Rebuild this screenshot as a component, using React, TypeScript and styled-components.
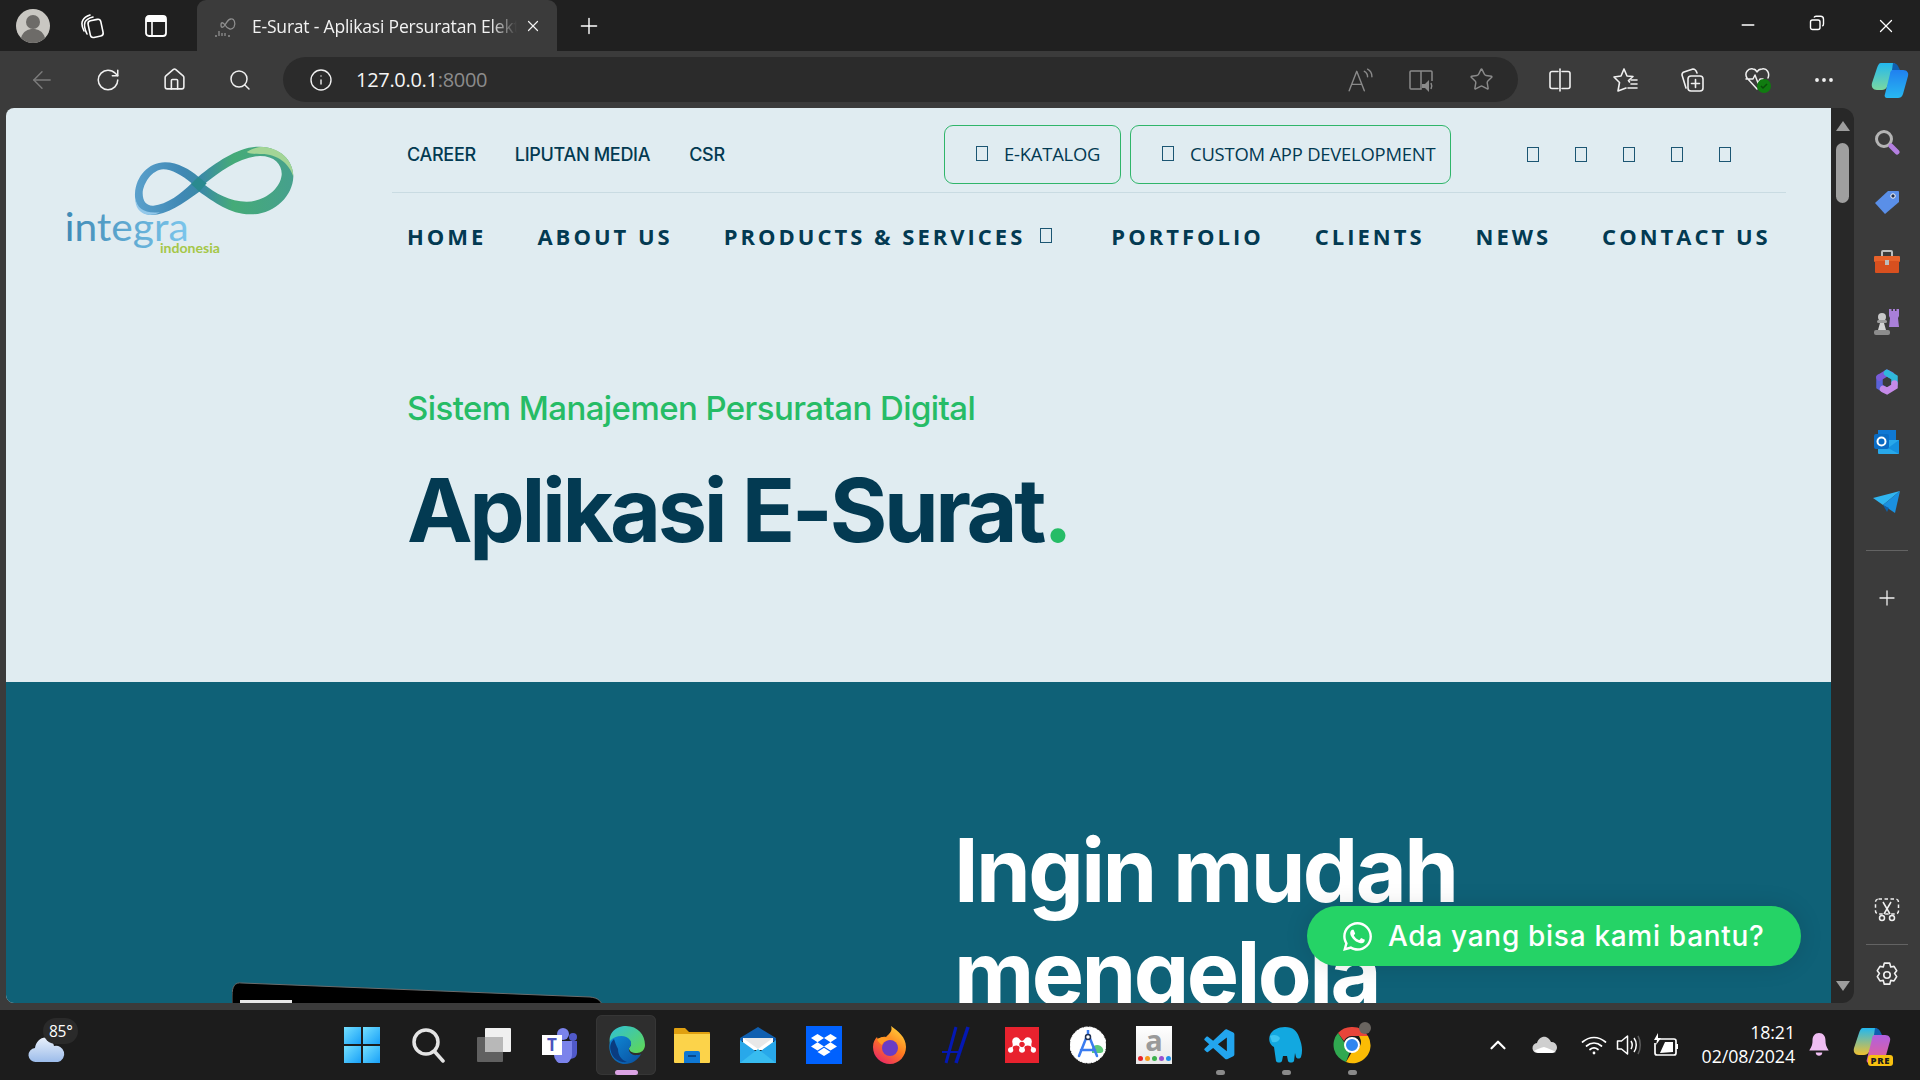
import React from 'react';
import styled, { createGlobalStyle } from 'styled-components';
import { ArrowLeft, RotateCw, House, Search, Info, Star, Plus, X, Ellipsis, ChevronUp, Minus } from 'lucide-react';
import { FaWhatsapp } from 'react-icons/fa';
import { SiDropbox, SiMendeley } from 'react-icons/si';
import { VscVscode } from 'react-icons/vsc';

const GlobalStyle = createGlobalStyle`
  html, body { margin: 0; padding: 0; background: #202020; overflow: hidden; }
  * { box-sizing: border-box; }
`;

const Screen = styled.div`
  width: 1920px;
  height: 1080px;
  display: flex;
  flex-direction: column;
  background: #3b3b3b;
  font-family: "Open Sans", sans-serif;
  overflow: hidden;
`;

/* browser chrome */
const TabBar = styled.div`
  height: 51px;
  flex: none;
  background: #202020;
  display: flex;
  align-items: center;
  color: #fff;
`;

const TabIcon = styled.div<{ $w: number }>`
  width: ${p => p.$w}px;
  flex: none;
  display: flex;
  justify-content: center;
  align-items: center;
`;

const Tab = styled.div`
  width: 360px;
  height: 51px;
  margin-left: 6px;
  flex: none;
  background: #3b3b3b;
  border-radius: 9px 9px 0 0;
  display: flex;
  align-items: center;
  padding-left: 17px;
  color: #f2f2f2;
  font-size: 17.5px;
`;

const TabTitle = styled.span`
  width: 265px;
  margin: 0 7px 0 14px;
  white-space: nowrap;
  overflow: hidden;
  letter-spacing: -0.2px;
  -webkit-mask-image: linear-gradient(to right, #000 90%, transparent);
  mask-image: linear-gradient(to right, #000 90%, transparent);
`;

const WindowControls = styled.div`
  margin-left: auto;
  display: flex;
  padding-right: 0;
`;

const WindowButton = styled.div`
  width: 69px;
  display: flex;
  justify-content: center;
  color: #fff;
`;

const Toolbar = styled.div`
  height: 57px;
  flex: none;
  display: flex;
  align-items: flex-start;
  padding: 6px 0 0 9px;
  color: #f0f0f0;
`;

const ToolSlot = styled.div<{ $dim?: boolean }>`
  width: 66px;
  height: 45px;
  flex: none;
  display: flex;
  align-items: center;
  justify-content: center;
  color: ${p => (p.$dim ? '#7c7c7c' : '#f0f0f0')};
`;

const AddressBar = styled.div`
  width: 1235px;
  height: 45px;
  margin: 0 9px 0 10px;
  flex: none;
  border-radius: 23px;
  background: #2b2b2b;
  display: flex;
  align-items: center;
  padding-left: 26px;
  font-size: 20px;
  letter-spacing: -0.3px;
`;

const Host = styled.span`
  margin-left: 23px;
  color: #f5f5f5;
`;

const Port = styled.span`
  color: #8c8c8c;
`;

const AddressActions = styled.div`
  margin-left: auto;
  margin-right: 24px;
  display: flex;
  align-items: center;
  gap: 35px;
  color: #8a8a8a;
`;

/* middle */
const Middle = styled.div`
  flex: 1;
  min-height: 0;
  display: flex;
  padding-left: 6px;
`;

const Page = styled.div`
  width: 1825px;
  height: 895px;
  flex: none;
  position: relative;
  overflow: hidden;
  border-radius: 8px 0 0 8px;
  background: #e0ecf1;
`;

const Scrollbar = styled.div`
  width: 23px;
  height: 895px;
  flex: none;
  background: #282828;
  border-radius: 0 12px 12px 0;
  display: flex;
  flex-direction: column;
  align-items: center;
  padding: 13px 0 12px;
`;

const ScrollArrow = styled.div<{ $down?: boolean }>`
  width: 0;
  height: 0;
  border-left: 7px solid transparent;
  border-right: 7px solid transparent;
  ${p => (p.$down ? 'border-top: 10px solid #9d9d9d; margin-top: auto;' : 'border-bottom: 10px solid #9d9d9d;')}
`;

const ScrollThumb = styled.div`
  width: 13px;
  height: 60px;
  margin-top: 12px;
  border-radius: 7px;
  background: #9f9f9f;
`;

const SideBar = styled.div`
  flex: 1;
  height: 897px;
  display: flex;
  flex-direction: column;
  align-items: center;
  padding-top: 4px;
  color: #f0f0f0;
`;

const SideSlot = styled.div<{ $top?: number }>`
  width: 100%;
  height: 60px;
  margin-top: ${p => p.$top ?? 0}px;
  flex: none;
  display: flex;
  align-items: center;
  justify-content: center;
`;

const SideRule = styled.div<{ $top: number }>`
  width: 42px;
  height: 1px;
  margin-top: ${p => p.$top}px;
  flex: none;
  background: #636363;
`;

const SideBottom = styled.div`
  margin-top: auto;
  width: 100%;
  display: flex;
  flex-direction: column;
  align-items: center;
`;

/* site */
const Header = styled.div`
  display: flex;
  height: 172px;
`;

const LogoCol = styled.div`
  width: 386px;
  flex: none;
  padding: 22px 0 0 44px;
`;

const HeaderRight = styled.div`
  width: 1394px;
  flex: none;
`;

const TopBar = styled.div`
  height: 85px;
  padding: 17px 0 0 15px;
  display: flex;
  align-items: flex-start;
  border-bottom: 1px solid #c9dbe2;
  color: #033a52;
`;

const TopLinks = styled.div`
  height: 58px;
  display: flex;
  align-items: center;
  gap: 39px;
`;

const TopLink = styled.a`
  font-family: Inter, sans-serif;
  font-size: 18px;
  font-weight: 500;
  letter-spacing: -0.3px;
  color: #033a52;
`;

const TopButtons = styled.div`
  margin-left: auto;
  display: flex;
  gap: 9px;
`;

const OutlineButton = styled.a<{ $w: number }>`
  width: ${p => p.$w}px;
  height: 59px;
  padding: 0 0 2px 31px;
  display: flex;
  align-items: center;
  gap: 16px;
  border: 1px solid #2fb56a;
  border-radius: 9px;
  font-family: "Open Sans", sans-serif;
  font-size: 18.4px;
  letter-spacing: -0.2px;
  color: #033a52;
  white-space: nowrap;
`;

const Socials = styled.div`
  height: 58px;
  margin-left: 76px;
  padding-right: 55px;
  display: flex;
  align-items: center;
  gap: 36px;
`;

const Tofu = styled.span`
  display: inline-block;
  width: 12px;
  height: 15px;
  flex: none;
  border: 1px solid #1c5673;
`;

const NavCaret = styled(Tofu)`
  margin-right: 8px;
`;

const MainNav = styled.div`
  height: 85px;
  padding-left: 15px;
  display: flex;
  align-items: center;
  gap: 51px;
`;

const NavLink = styled.a`
  display: flex;
  align-items: center;
  gap: 15px;
  font-family: "Open Sans", sans-serif;
  font-size: 22px;
  font-weight: 700;
  letter-spacing: 3px;
  color: #033a52;
  white-space: nowrap;
`;

const Hero = styled.div`
  height: 402px;
  padding: 106px 0 0 401px;
`;

const Eyebrow = styled.div`
  font-family: Inter, sans-serif;
  font-size: 33px;
  line-height: 44px;
  font-weight: 500;
  letter-spacing: -0.58px;
  color: #26bc66;
`;

const HeroTitle = styled.h1`
  margin: 30px 0 0;
  font-family: Inter, sans-serif;
  font-size: 88px;
  line-height: 100px;
  font-weight: 650;
  letter-spacing: -3.36px;
  color: #033a52;
`;

const Dot = styled.span`
  color: #26bc66;
`;

const Band = styled.div`
  height: 321px;
  background: #0f6177;
  display: flex;
  overflow: hidden;
`;

const BandMedia = styled.div`
  width: 948px;
  flex: none;
  padding: 300px 0 0 226px;
`;

const BandText = styled.h2`
  width: 560px;
  margin: 137px 0 0;
  font-family: Inter, sans-serif;
  font-size: 88px;
  line-height: 103px;
  font-weight: 650;
  letter-spacing: -2.6px;
  color: #fff;
`;

const ChatButton = styled.a`
  position: absolute;
  left: 1301px;
  top: 798px;
  width: 494px;
  height: 60px;
  padding-left: 34px;
  display: flex;
  align-items: center;
  gap: 14px;
  border-radius: 30px;
  background: #25d366;
  box-shadow: 0 0 24px rgba(0, 0, 0, 0.12);
  color: #fff;
  font-family: Inter, sans-serif;
  font-size: 28px;
  font-weight: 500;
  letter-spacing: 0.7px;
  white-space: nowrap;
`;

/* taskbar */
const Taskbar = styled.div`
  height: 70px;
  flex: none;
  margin-top: 7px;
  background: #1c1c1c;
  display: flex;
  align-items: center;
  color: #fff;
`;

const WeatherSlot = styled.div`
  width: 329px;
  height: 70px;
  flex: none;
  position: relative;
  padding: 22px 0 0 28px;
`;

const TempBadge = styled.div`
  position: absolute;
  left: 43px;
  top: 8px;
  height: 26px;
  padding: 0 6px;
  line-height: 26px;
  border-radius: 13px;
  background: #2a2a2a;
  font-size: 15.5px;
  letter-spacing: -0.3px;
`;

const TaskSlot = styled.div<{ $active?: boolean }>`
  width: 66px;
  height: 60px;
  flex: none;
  position: relative;
  display: flex;
  align-items: center;
  justify-content: center;
  border-radius: 6px;
  ${p => p.$active && 'background: #2e2e2e; box-shadow: inset 0 0 0 1px #363636; width: 60px; margin: 0 3px;'}
`;

const RunDot = styled.span<{ $active?: boolean }>`
  position: absolute;
  bottom: 0;
  left: 50%;
  width: ${p => (p.$active ? 23 : 9)}px;
  height: 5px;
  margin-left: ${p => (p.$active ? -11.5 : -4.5)}px;
  border-radius: 3px;
  background: ${p => (p.$active ? '#dba3e4' : '#8a8a8a')};
`;

const Tray = styled.div`
  margin-left: auto;
  height: 70px;
  display: flex;
  align-items: center;
`;

const TraySlot = styled.div<{ $w: number }>`
  width: ${p => p.$w}px;
  flex: none;
  display: flex;
  align-items: center;
  justify-content: center;
`;

const Clock = styled.div`
  width: 110px;
  margin-top: -3px;
  text-align: right;
  font-size: 17.8px;
  line-height: 24px;
  letter-spacing: -0.1px;
`;

const AmazonTile = styled.div`
  width: 36px;
  height: 38px;
  background: linear-gradient(#fff, #e8e8e8);
  display: flex;
  flex-direction: column;
  align-items: center;
  font-family: "Open Sans", sans-serif;
  font-size: 29px;
  line-height: 27px;
  font-weight: 700;
  color: #9a9a9a;
`;

const AmazonDots = styled.div`
  display: flex;
  gap: 2px;
  margin-top: 3px;
`;

const AmazonDot = styled.span<{ $c: string }>`
  width: 5px;
  height: 5px;
  border-radius: 50%;
  background: ${p => p.$c};
`;

const BrandTile = styled.div<{ $bg: string; $w: number; $h: number }>`
  width: ${p => p.$w}px;
  height: ${p => p.$h}px;
  background: ${p => p.$bg};
  color: #fff;
  display: flex;
  align-items: center;
  justify-content: center;
`;

/* drawn icons */
const Logo = () => (
  <svg width="260" height="130" viewBox="0 0 780 390">
    <defs>
      <linearGradient id="logoBand" x1="0" x2="1" y1="0" y2="0">
        <stop offset="0" stopColor="#5aa0cc" />
        <stop offset="0.3" stopColor="#3f88b4" />
        <stop offset="0.42" stopColor="#3b8aa6" />
        <stop offset="0.62" stopColor="#45ab78" />
        <stop offset="1" stopColor="#46a08d" />
      </linearGradient>
      <linearGradient id="logoWord" x1="0" x2="1" y1="0" y2="0">
        <stop offset="0" stopColor="#3f8ab5" />
        <stop offset="1" stopColor="#7cc6ec" />
      </linearGradient>
    </defs>
    <path
      fill="url(#logoBand)"
      fillRule="evenodd"
      d="M445 140C500 95 570 48 630 50C690 52 730 90 730 140C728 200 670 255 600 253C540 252 490 215 448 185C400 220 350 255 305 255C270 255 253 220 255 190C258 140 295 97 345 97C385 97 420 120 445 140ZM425 160C395 135 365 118 340 118C305 120 280 160 278 190C278 215 290 228 310 227C350 225 395 190 425 160ZM462 163C510 125 570 80 630 78C675 78 697 105 695 135C690 180 640 215 590 215C540 215 495 190 462 163Z"
    />
    <path fill="#a3d596" d="M590 66C615 52 630 50 640 51C690 54 730 90 730 140C718 100 680 70 630 72C615 72 600 72 590 66Z" />
    <path fill="#93c8ea" d="M256 205C262 235 282 252 330 247C315 254 305 255 300 255C270 255 254 230 256 205Z" />
    <path fill="#2a8a8f" d="M445 140L470 160L448 185L423 162Z" />
    <text x="44" y="332" fontFamily="Lato, sans-serif" fontSize="118" fill="url(#logoWord)" textLength="372" lengthAdjust="spacingAndGlyphs">
      integra
    </text>
    <text x="330" y="368" fontFamily="Lato, sans-serif" fontSize="38" fontWeight="700" fill="#a5c747" textLength="180" lengthAdjust="spacingAndGlyphs">
      indonesia
    </text>
  </svg>
);

const Laptop = () => (
  <svg width="372" height="30" viewBox="0 0 372 30">
    <path d="M0 14C0 4 3 0 10 1L358 15C366 16 370 18 372 30H0Z" fill="#000" stroke="#6c6c6c" strokeWidth="1" />
    <path d="M8 18H60V30H8Z" fill="#e8e8e8" />
  </svg>
);

const Avatar = () => (
  <svg width="34" height="34" viewBox="0 0 34 34">
    <circle cx="17" cy="17" r="17" fill="#c9c7c2" />
    <circle cx="17" cy="13" r="7" fill="#6d6b68" />
    <path d="M5 29c2-7 7-9 12-9s10 2 12 9a17 17 0 0 1-24 0Z" fill="#6d6b68" />
  </svg>
);

const line = { fill: 'none', stroke: 'currentColor', strokeWidth: 1.6, strokeLinecap: 'round' as const, strokeLinejoin: 'round' as const };

const TabsIcon = () => (
  <svg width="26" height="26" viewBox="0 0 26 26" {...line}>
    <rect x="9" y="7" width="13" height="17" rx="3" transform="rotate(-12 15 15)" />
    <path d="M7 21C5 17 4 12 5 9c1-2 4-4 8-5" />
    <path d="M4 18C2 14 1 10 3 7c1-2 4-4 7-5" />
  </svg>
);

const VerticalTabsIcon = () => (
  <svg width="22" height="22" viewBox="0 0 22 22">
    <rect x="1" y="1" width="20" height="20" rx="3" fill="none" stroke="#fff" strokeWidth="1.8" />
    <path d="M1 4a3 3 0 0 1 3-3h14a3 3 0 0 1 3 3v3H1Z" fill="#fff" />
    <path d="M7 7v14" stroke="#fff" strokeWidth="1.6" />
  </svg>
);

const Favicon = () => (
  <svg width="24" height="24" viewBox="0 0 24 24" fill="none" stroke="#8f8f8f" strokeWidth="1.3">
    <path d="M11 11c3 5 7 5 9 2 2-4 0-9-3-8-3 0-4 3-6 6Zm0 0c-2-3-4-3-4 0 0 3 2 3 4 0Z" />
    <path d="M1 22h2M5 22v-5M8 22v-3M11 22v-3M14 22h2" />
  </svg>
);

const RestoreIcon = () => (
  <svg width="16" height="16" viewBox="0 0 16 16" fill="none" stroke="#fff" strokeWidth="1.4">
    <rect x="1.5" y="5" width="9.5" height="9.5" rx="2" />
    <path d="M5 2.5c.5-1 1.3-1.300 2-1.300h4.500c1.800 0 3 1.300 3 3V9c0 1-.5 1.700-1.200 2" />
  </svg>
);

const ReadAloud = () => (
  <svg width="26" height="26" viewBox="0 0 24 24" {...line} strokeWidth={1.3}>
    <path d="M2 22 9 4l7 18M5 16h8" />
    <path d="M16 4c2 1 3 3 3 5M19 2c2 1 4 4 4 7" />
  </svg>
);

const ImmersiveIcon = () => (
  <svg width="26" height="26" viewBox="0 0 26 26" fill="none" stroke="currentColor" strokeWidth="1.5">
    <path d="M13 4v18H3a1 1 0 0 1-1-1V5a1 1 0 0 1 1-1h20a1 1 0 0 1 1 1v9" />
    <path d="M14 17h3l4-4v12l-4-4h-3Z" fill="currentColor" stroke="none" />
    <path d="M23 16c1 2 1 4 0 6" />
  </svg>
);

const SplitIcon = () => (
  <svg width="24" height="24" viewBox="0 0 24 24" {...line}>
    <path d="M10 3.500H4a2 2 0 0 0-2 2v13a2 2 0 0 0 2 2h6" />
    <path d="M14 3.500h6a2 2 0 0 1 2 2v13a2 2 0 0 1-2 2h-6" />
    <path d="M12 1v22" />
  </svg>
);

const FavoritesIcon = () => (
  <svg width="26" height="26" viewBox="0 0 26 26" {...line}>
    <path d="M11 2l3 7 6 .5-4.500 4 1 1.500M5 24l1.500-8.500L1 10l7-1 3-7M5 24l8-3" />
    <path d="M18 13h6M18 17h6M15 21h9" />
  </svg>
);

const CollectionsIcon = () => (
  <svg width="26" height="26" viewBox="0 0 26 26" {...line}>
    <path d="M7 21 3 8a3 3 0 0 1 2-3l9-3c2 0 3 1 4 4" />
    <rect x="9" y="9" width="15" height="15" rx="3" />
    <path d="M16.500 12.500v8M12.500 16.500h8" />
  </svg>
);

const HealthIcon = () => (
  <svg width="28" height="28" viewBox="0 0 28 28">
    <path
      d="M13 23 3 12C0 7 4 2 9 3c2 0 3 1 4 3 1-2 3-3 5-3 5-1 8 4 6 9M2 13h7l2-4 3 8 2-4h3"
      fill="none"
      stroke="#f0f0f0"
      strokeWidth="1.500"
      strokeLinecap="round"
      strokeLinejoin="round"
    />
    <circle cx="20" cy="20" r="7" fill="#107c10" />
    <path d="M17 20l2 2 4-4" fill="none" stroke="#0a4d0a" strokeWidth="1.500" />
  </svg>
);

const CopilotIcon = ({ id, pre }: { id: string; pre?: boolean }) => (
  <svg width="38" height="38" viewBox="0 0 38 38">
    <defs>
      <linearGradient id={id + 'a'} x1="0" y1="0" x2="0" y2="1">
        <stop offset="0" stopColor="#22b8f0" />
        <stop offset="1" stopColor={pre ? '#f0c030' : '#7bd8a0'} />
      </linearGradient>
      <linearGradient id={id + 'b'} x1="0" y1="0" x2="0" y2="1">
        <stop offset="0" stopColor={pre ? '#b060e0' : '#2080f0'} />
        <stop offset="1" stopColor={pre ? '#e86090' : '#28b8f0'} />
      </linearGradient>
    </defs>
    <path d="M10 2h12c2 0 3 2 2 4l-8 20c-1 2-3 3-5 3H6c-4 0-6-3-5-7L6 7c1-3 2-5 4-5Z" fill={`url(#${id}a)`} />
    <path d="M22 9h10c4 0 6 3 5 6l-5 18c-1 3-3 4-5 4H16c-2 0-3-2-2-4l5-20c0-2 1-4 3-4Z" fill={`url(#${id}b)`} />
    <path d="M22 2c2 0 4 1 5 3l2 4h-8Z" fill="#0f5fb0" />
  </svg>
);

const MagnifierColor = () => (
  <svg width="26" height="26" viewBox="0 0 26 26">
    <circle cx="10" cy="10" r="7.500" fill="none" stroke="#b4b4b4" strokeWidth="3" />
    <path d="M17 17l6 6" stroke="#b37fe0" strokeWidth="5" strokeLinecap="round" />
  </svg>
);

const TagColor = () => (
  <svg width="26" height="26" viewBox="0 0 26 26">
    <path d="M14 2h10a1 1 0 0 1 1 1v10L11 25 1 14Z" fill="#5a8fe8" strokeLinejoin="round" />
    <circle cx="19" cy="7" r="2.200" fill="#1f2f50" stroke="#fff" strokeWidth="1" />
  </svg>
);

const ToolboxColor = () => (
  <svg width="28" height="26" viewBox="0 0 28 26">
    <path d="M9 7V3a1 1 0 0 1 1-1h8a1 1 0 0 1 1 1v4" fill="none" stroke="#bdbdbd" strokeWidth="2" />
    <rect x="1" y="7" width="26" height="6" fill="#e8622a" rx="1" />
    <rect x="2" y="12" width="24" height="12" fill="#d8501f" rx="1" />
    <rect x="12" y="11" width="4" height="5" fill="#bdbdbd" />
  </svg>
);

const ChessColor = () => (
  <svg width="28" height="28" viewBox="0 0 28 28">
    <path d="M16 1h2.500v2H20V1h2v2h1.500V1H26v7l-1 2 1 9H16l1-9-1-2Z" fill="#a97fd8" />
    <circle cx="9" cy="9" r="4" fill="#c8c8c8" />
    <rect x="4" y="12" width="10" height="3" rx="1.500" fill="#9e9e9e" />
    <path d="M7 15h4l2 7H5Z" fill="#d4d4d4" />
    <rect x="1" y="22" width="16" height="5" rx="2" fill="#8c8c8c" />
  </svg>
);

const OfficeColor = () => (
  <svg width="26" height="28" viewBox="0 0 26 28" fill="none" strokeWidth="6.500" strokeLinecap="round">
    <path d="M5.500 9.500v9l4 2.500" stroke="#5a62d8" />
    <path d="M5.500 9.500 13 5l4 2" stroke="#7b5bd8" />
    <path d="M13 5l7.500 4.500v6" stroke="#30b8dc" />
    <path d="M20.500 15.500v3L13 23l-4-2" stroke="#c58ae8" />
  </svg>
);

const OutlookColor = () => (
  <svg width="26" height="26" viewBox="0 0 26 26">
    <rect x="4" y="1" width="18" height="10" fill="#0f78d4" />
    <path d="M4 11h21v13a1 1 0 0 1-1 1H5a1 1 0 0 1-1-1Z" fill="#28a8ea" />
    <path d="M25 11 14 19l11 6Z" fill="#1490df" />
    <rect x="0" y="5" width="15" height="15" rx="2" fill="#0a6cc4" />
    <circle cx="7.500" cy="12.500" r="4" fill="none" stroke="#fff" strokeWidth="2" />
  </svg>
);

const SendColor = () => (
  <svg width="28" height="24" viewBox="0 0 28 24">
    <path d="M0 8 27 1 10 15Z" fill="#30b5f0" />
    <path d="M27 1 22 23 10 15Z" fill="#1a90e0" />
    <path d="M10 15 14 22 16 18Z" fill="#0d5fa8" />
  </svg>
);

const SnipIcon = () => (
  <svg width="26" height="26" viewBox="0 0 26 26" fill="none" stroke="#f0f0f0" strokeWidth="1.500">
    <rect x="1.500" y="2" width="23" height="15" rx="3" strokeDasharray="3.500 2.500" />
    <path d="M9 5l7 12M17 5l-7 12" />
    <circle cx="8" cy="21" r="2.500" />
    <circle cx="18" cy="21" r="2.500" />
  </svg>
);

const GearIcon = () => (
  <svg width="28" height="28" viewBox="0 0 26 26" fill="none" stroke="#f0f0f0" strokeWidth="1.500" strokeLinejoin="round">
    <path d="M10.500 2h5l1 3.500 3-.5 2.500 4-2 2.500 2 3-2.500 4-3-.5-1 3.500h-5l-1-3.500-3 .5-2.500-4 2-3-2-2.500 2.500-4 3 .5Z" />
    <circle cx="13" cy="13" r="3" />
  </svg>
);

const WeatherIcon = () => (
  <svg width="38" height="32" viewBox="0 0 38 32">
    <defs>
      <linearGradient id="cloudFill" x1="0" y1="0" x2="0" y2="1">
        <stop offset="0" stopColor="#e8f0fb" />
        <stop offset="1" stopColor="#9cbcea" />
      </linearGradient>
    </defs>
    <path d="M8 30a7 7 0 0 1-1-14c1-7 7-12 13-10 4 1 5 4 6 8a8 8 0 0 1 4 16Z" fill="url(#cloudFill)" />
    <rect x="20" y="4" width="5" height="5" fill="#e87a20" />
  </svg>
);

const StartIcon = () => (
  <svg width="36" height="36" viewBox="0 0 36 36">
    <defs>
      <linearGradient id="winA" x1="0" y1="0" x2="1" y2="1">
        <stop offset="0" stopColor="#74e0ff" />
        <stop offset="1" stopColor="#18a0f8" />
      </linearGradient>
    </defs>
    <rect x="0" y="0" width="17" height="17" fill="url(#winA)" />
    <rect x="19" y="0" width="17" height="17" fill="url(#winA)" />
    <rect x="0" y="19" width="17" height="17" fill="url(#winA)" />
    <rect x="19" y="19" width="17" height="17" fill="url(#winA)" />
  </svg>
);

const TaskSearchIcon = () => (
  <svg width="34" height="36" viewBox="0 0 34 36" fill="none" stroke="#e4e4e4" strokeWidth="3.500" strokeLinecap="round">
    <circle cx="15" cy="15" r="12" />
    <path d="M24 25l8 9" />
  </svg>
);

const TaskViewIcon = () => (
  <svg width="36" height="36" viewBox="0 0 36 36">
    <rect x="9" y="1" width="26" height="24" rx="1" fill="#f0f0f0" />
    <rect x="1" y="10" width="26" height="25" rx="1" fill="#6c6c6c" opacity="0.85" />
    <rect x="9" y="10" width="18" height="15" fill="#b8b8b8" />
  </svg>
);

const TeamsIcon = () => (
  <svg width="36" height="36" viewBox="0 0 36 36">
    <circle cx="21" cy="7" r="6" fill="#7b83eb" />
    <circle cx="31" cy="10" r="4" fill="#5059c9" />
    <path d="M26 14h9v12a6 6 0 0 1-9 5Z" fill="#5059c9" />
    <path d="M12 14h18v14a9 9 0 0 1-18 0Z" fill="#7b83eb" />
    <rect x="0" y="8" width="20" height="20" fill="#fff" />
    <text x="10" y="24" textAnchor="middle" fontFamily="Open Sans, sans-serif" fontSize="17" fontWeight="700" fill="#4b53bc">
      T
    </text>
  </svg>
);

const EdgeIcon = () => (
  <svg width="38" height="38" viewBox="0 0 38 38">
    <defs>
      <linearGradient id="edgeA" x1="0" y1="0" x2="1" y2="1">
        <stop offset="0" stopColor="#2fc0d8" />
        <stop offset="1" stopColor="#62d84f" />
      </linearGradient>
      <linearGradient id="edgeB" x1="0" y1="0" x2="1" y2="1">
        <stop offset="0" stopColor="#0f8ad8" />
        <stop offset="1" stopColor="#0a4f9e" />
      </linearGradient>
    </defs>
    <path d="M19 0C31 0 38 9 38 19c0 5-4 8-8 8-5 0-8-2-8-5 2-2 3-4 1-7C19 10 9 11 3 17 1 7 9 0 19 0Z" fill="url(#edgeA)" />
    <path d="M3 15c5-6 16-7 20-1 2 3 1 6-1 8-1 4 3 8 8 7 1 0 3 0 4-1-3 6-9 10-16 10C8 38 0 28 3 15Z" fill="url(#edgeB)" />
    <path d="M11 23c0 6 3 11 9 13-7 1-14-3-16-10-2-6 0-10 3-13 1 3 2 6 4 10Z" fill="#0a3c80" />
  </svg>
);

const FolderIcon = () => (
  <svg width="36" height="36" viewBox="0 0 36 36">
    <path d="M0 2a1 1 0 0 1 1-1h10l4 4h20a1 1 0 0 1 1 1v8H0Z" fill="#e0a010" />
    <path d="M0 7h36v28a1 1 0 0 1-1 1H1a1 1 0 0 1-1-1Z" fill="#fcd34a" />
    <path d="M10 36V26a2 2 0 0 1 2-2h12a2 2 0 0 1 2 2v10Z" fill="#0f78d4" />
    <rect x="14" y="28" width="8" height="2" fill="#08488c" />
  </svg>
);

const MailIcon = () => (
  <svg width="36" height="36" viewBox="0 0 36 36">
    <path d="M0 11 18 0l18 11v3H0Z" fill="#0f5fb0" />
    <path d="M3 11h30v12H3Z" fill="#fff" />
    <path d="M3 11h30L18 22Z" fill="#e8e8e8" />
    <path d="M0 13l18 13 18-13v23H0Z" fill="#28a8ea" />
    <path d="M0 36 18 22l18 14Z" fill="#38bcf0" />
  </svg>
);

const FirefoxIcon = () => (
  <svg width="36" height="38" viewBox="0 0 36 38">
    <defs>
      <linearGradient id="foxA" x1="0.8" y1="0" x2="0.2" y2="1">
        <stop offset="0" stopColor="#ffd53a" />
        <stop offset="0.5" stopColor="#ff7a1f" />
        <stop offset="1" stopColor="#e8226a" />
      </linearGradient>
    </defs>
    <path d="M19 0c7 5 15 11 15 21 0 9-7 17-16 17S1 31 1 21c0-5 2-8 4-10l1 3c2-3 6-4 8-3C17 8 21 5 19 0Z" fill="url(#foxA)" />
    <circle cx="18" cy="22" r="8" fill="#6a3cc4" />
    <path d="M5 13c5-3 10-2 13 1-4 0-7 2-8 5-2-2-4-3-5-6Z" fill="#ff9a24" />
  </svg>
);

const HashIcon = () => (
  <svg width="28" height="38" viewBox="0 0 28 38" fill="none" stroke="#0418b4" strokeLinecap="butt">
    <path d="M14 1 4 37" strokeWidth="3" />
    <path d="M26 1 14 37" strokeWidth="3.500" />
    <path d="M0 26h16" strokeWidth="2" />
  </svg>
);

const StudioIcon = () => (
  <svg width="36" height="38" viewBox="0 0 36 38">
    <circle cx="18" cy="19" r="18" fill="#fff" stroke="#fff" strokeWidth="1" strokeDasharray="4 1" />
    <path d="M22 22c2-4 9-4 11 1 1 3-1 4-3 4h-8Z" fill="#5cc878" />
    <path d="M17 10 9 30M19 10l8 20M11 24h14" fill="none" stroke="#3a7cf0" strokeWidth="2.500" strokeLinecap="round" />
    <path d="M18 4v4" stroke="#3a7cf0" strokeWidth="2.500" />
    <circle cx="18" cy="11" r="2.500" fill="#fff" stroke="#1f2f50" strokeWidth="1.500" />
  </svg>
);

const ElephantIcon = () => (
  <svg width="34" height="36" viewBox="0 0 34 36">
    <path
      d="M16 0c8 0 12 4 14 10 3 7 4 14 2 20-1 2-4 2-5 0l-1-4-1 8c-1 2-5 2-6 0l-1-5h-4l-1 5c-1 2-5 2-6 0L5 20C1 18-1 13 1 8c2-5 8-8 15-8Z"
      fill="#12a8e0"
    />
    <path d="M1 9c4-2 8-1 10 2-1 4-5 5-8 4Z" fill="#3cc4f0" />
  </svg>
);

const ChromeIcon = () => (
  <svg width="40" height="46" viewBox="0 0 40 46">
    <g transform="translate(2 5)">
      <path d="M18 0a18 18 0 0 1 16 9H18a9 9 0 0 0-8 5L4 6a18 18 0 0 1 14-6Z" fill="#e8453a" />
      <path d="M4 6l6 9c2 3 5 5 8 4l-6 16A18 18 0 0 1 4 6Z" fill="#30a850" />
      <path d="M34 9a18 18 0 0 1-22 26l7-12c4 0 8-3 8-8 0-2-1-4-2-6Z" fill="#fbbc05" />
      <circle cx="18" cy="18" r="7" fill="#2f86f0" stroke="#fff" strokeWidth="2" />
    </g>
    <circle cx="33" cy="6" r="6" fill="#6a6560" />
  </svg>
);

const CloudIcon = () => (
  <svg width="26" height="18" viewBox="0 0 26 18">
    <path d="M6 17a5 5 0 0 1-1-10c1-4 5-7 9-6 3 1 4 3 5 5a5.500 5.500 0 0 1 1 11Z" fill="#cfcfcf" />
    <path d="M2 15c3-2 6-3 10-4 4 1 8 3 12 5l-4 1H6Z" fill="#fff" />
  </svg>
);

const WifiIcon = () => (
  <svg width="26" height="20" viewBox="0 0 26 20" fill="none" stroke="#fff" strokeWidth="1.700" strokeLinecap="round">
    <path d="M1.500 7c7-6 16-6 23 0M5.500 11c4.500-4 10.500-4 15 0M9 14.500c2.500-2 5.500-2 8 0" />
    <circle cx="13" cy="18" r="1.400" fill="#fff" stroke="none" />
  </svg>
);

const VolumeIcon = () => (
  <svg width="26" height="22" viewBox="0 0 26 22" fill="none" stroke="#fff" strokeWidth="1.500" strokeLinejoin="round">
    <path d="M1.500 7v8h4l6 5V2l-6 5Z" />
    <path d="M15 7c1.500 2.500 1.500 5.500 0 8M18 4c3 4 3 10 0 14" />
    <path d="M22 2c3 5 3 13 0 18" stroke="#5c5c5c" />
  </svg>
);

const BatteryIcon = () => (
  <svg width="26" height="24" viewBox="0 0 26 24">
    <path d="M6 6h15a2 2 0 0 1 2 2v12a2 2 0 0 1-2 2H4a2 2 0 0 1-2-2V10" fill="none" stroke="#fff" strokeWidth="1.700" />
    <path d="M23 11h2v5h-2Z" fill="#fff" />
    <path d="M7 20 12 9h8v10Z" fill="#fff" />
    <path d="M5 0 1 7h3l-1 5 5-7H5Z" fill="#fff" />
  </svg>
);

const BellIcon = () => (
  <svg width="22" height="26" viewBox="0 0 20 24">
    <path d="M10 1c4 0 6 3 6 7 0 5 2 7 3 9H1c1-2 3-4 3-9 0-4 2-7 6-7Z" fill="#efbdf2" />
    <path d="M7 19h6c0 4-6 4-6 0Z" fill="#efbdf2" />
  </svg>
);

const PreBadge = styled.div`
  position: absolute;
  right: -2px;
  bottom: -2px;
  padding: 0 3px;
  height: 11px;
  line-height: 11px;
  border-radius: 3px;
  background: #f8c010;
  color: #1c1c1c;
  font-size: 9.5px;
  font-weight: 800;
  letter-spacing: 0.6px;
`;

const CopilotWrap = styled.div`
  position: relative;
  display: flex;
`;

const navItems = ['HOME', 'ABOUT US', 'PRODUCTS & SERVICES', 'PORTFOLIO', 'CLIENTS', 'NEWS', 'CONTACT US'];
const amazonColors = ['#e8222a', '#f59a1c', '#3cb04c', '#9a4fd0', '#1f90e8'];

export default function App() {
  return (
    <Screen>
      <GlobalStyle />
      <TabBar>
        <TabIcon $w={66}><Avatar /></TabIcon>
        <TabIcon $w={54}><TabsIcon /></TabIcon>
        <TabIcon $w={71}><VerticalTabsIcon /></TabIcon>
        <Tab>
          <Favicon />
          <TabTitle>E-Surat - Aplikasi Persuratan Elektronik</TabTitle>
          <X size={18} strokeWidth={1.6} />
        </Tab>
        <TabIcon $w={64}><Plus size={26} strokeWidth={1.3} /></TabIcon>
        <WindowControls>
          <WindowButton><Minus size={20} strokeWidth={1.6} /></WindowButton>
          <WindowButton><RestoreIcon /></WindowButton>
          <WindowButton><X size={22} strokeWidth={1.4} /></WindowButton>
        </WindowControls>
      </TabBar>

      <Toolbar>
        <ToolSlot $dim><ArrowLeft size={28} strokeWidth={1.2} /></ToolSlot>
        <ToolSlot><RotateCw size={26} strokeWidth={1.4} /></ToolSlot>
        <ToolSlot><House size={25} strokeWidth={1.5} /></ToolSlot>
        <ToolSlot><Search size={24} strokeWidth={1.5} /></ToolSlot>
        <AddressBar>
          <Info size={24} strokeWidth={1.4} />
          <Host>127.0.0.1<Port>:8000</Port></Host>
          <AddressActions>
            <ReadAloud />
            <ImmersiveIcon />
            <Star size={25} strokeWidth={1.4} />
          </AddressActions>
        </AddressBar>
        <ToolSlot><SplitIcon /></ToolSlot>
        <ToolSlot><FavoritesIcon /></ToolSlot>
        <ToolSlot><CollectionsIcon /></ToolSlot>
        <ToolSlot><HealthIcon /></ToolSlot>
        <ToolSlot><Ellipsis size={24} strokeWidth={1.8} /></ToolSlot>
        <ToolSlot><CopilotIcon id="copilotTop" /></ToolSlot>
      </Toolbar>

      <Middle>
        <Page>
          <Header>
            <LogoCol><Logo /></LogoCol>
            <HeaderRight>
              <TopBar>
                <TopLinks>
                  <TopLink>CAREER</TopLink>
                  <TopLink>LIPUTAN MEDIA</TopLink>
                  <TopLink>CSR</TopLink>
                </TopLinks>
                <TopButtons>
                  <OutlineButton $w={177}><Tofu />E-KATALOG</OutlineButton>
                  <OutlineButton $w={321}><Tofu />CUSTOM APP DEVELOPMENT</OutlineButton>
                </TopButtons>
                <Socials>
                  {[0, 1, 2, 3, 4].map(i => <Tofu key={i} />)}
                </Socials>
              </TopBar>
              <MainNav>
                {navItems.map(item => (
                  <NavLink key={item}>
                    {item}
                    {item === 'PRODUCTS & SERVICES' && <NavCaret />}
                  </NavLink>
                ))}
              </MainNav>
            </HeaderRight>
          </Header>

          <Hero>
            <Eyebrow>Sistem Manajemen Persuratan Digital</Eyebrow>
            <HeroTitle>Aplikasi E-Surat<Dot>.</Dot></HeroTitle>
          </Hero>

          <Band>
            <BandMedia><Laptop /></BandMedia>
            <BandText>Ingin mudah mengelola</BandText>
          </Band>

          <ChatButton>
            <FaWhatsapp size={33} />
            Ada yang bisa kami bantu?
          </ChatButton>
        </Page>

        <Scrollbar>
          <ScrollArrow />
          <ScrollThumb />
          <ScrollArrow $down />
        </Scrollbar>

        <SideBar>
          <SideSlot><MagnifierColor /></SideSlot>
          <SideSlot><TagColor /></SideSlot>
          <SideSlot><ToolboxColor /></SideSlot>
          <SideSlot><ChessColor /></SideSlot>
          <SideSlot><OfficeColor /></SideSlot>
          <SideSlot><OutlookColor /></SideSlot>
          <SideSlot><SendColor /></SideSlot>
          <SideRule $top={18} />
          <SideSlot $top={17}><Plus size={24} strokeWidth={1.3} /></SideSlot>
          <SideBottom>
            <SideSlot><SnipIcon /></SideSlot>
            <SideRule $top={4} />
            <SideSlot><GearIcon /></SideSlot>
          </SideBottom>
        </SideBar>
      </Middle>

      <Taskbar>
        <WeatherSlot>
          <WeatherIcon />
          <TempBadge>85°</TempBadge>
        </WeatherSlot>
        <TaskSlot><StartIcon /></TaskSlot>
        <TaskSlot><TaskSearchIcon /></TaskSlot>
        <TaskSlot><TaskViewIcon /></TaskSlot>
        <TaskSlot><TeamsIcon /></TaskSlot>
        <TaskSlot $active><EdgeIcon /><RunDot $active /></TaskSlot>
        <TaskSlot><FolderIcon /></TaskSlot>
        <TaskSlot><MailIcon /></TaskSlot>
        <TaskSlot><BrandTile $bg="#0061fe" $w={36} $h={38}><SiDropbox size={26} /></BrandTile></TaskSlot>
        <TaskSlot><FirefoxIcon /></TaskSlot>
        <TaskSlot><HashIcon /></TaskSlot>
        <TaskSlot><BrandTile $bg="#e8222e" $w={34} $h={36}><SiMendeley size={28} /></BrandTile></TaskSlot>
        <TaskSlot><StudioIcon /></TaskSlot>
        <TaskSlot>
          <AmazonTile>
            a
            <AmazonDots>
              {amazonColors.map(c => <AmazonDot key={c} $c={c} />)}
            </AmazonDots>
          </AmazonTile>
        </TaskSlot>
        <TaskSlot><VscVscode size={37} color="#22a5ee" /><RunDot /></TaskSlot>
        <TaskSlot><ElephantIcon /><RunDot /></TaskSlot>
        <TaskSlot><ChromeIcon /><RunDot /></TaskSlot>
        <Tray>
          <TraySlot $w={30}><ChevronUp size={26} strokeWidth={2} /></TraySlot>
          <TraySlot $w={64}><CloudIcon /></TraySlot>
          <TraySlot $w={34}><WifiIcon /></TraySlot>
          <TraySlot $w={36}><VolumeIcon /></TraySlot>
          <TraySlot $w={38}><BatteryIcon /></TraySlot>
          <Clock>
            18:21
            <br />
            02/08/2024
          </Clock>
          <TraySlot $w={47}><BellIcon /></TraySlot>
          <TraySlot $w={60}>
            <CopilotWrap>
              <CopilotIcon id="copilotTray" pre />
              <PreBadge>PRE</PreBadge>
            </CopilotWrap>
          </TraySlot>
          <TraySlot $w={18} />
        </Tray>
      </Taskbar>
    </Screen>
  );
}
